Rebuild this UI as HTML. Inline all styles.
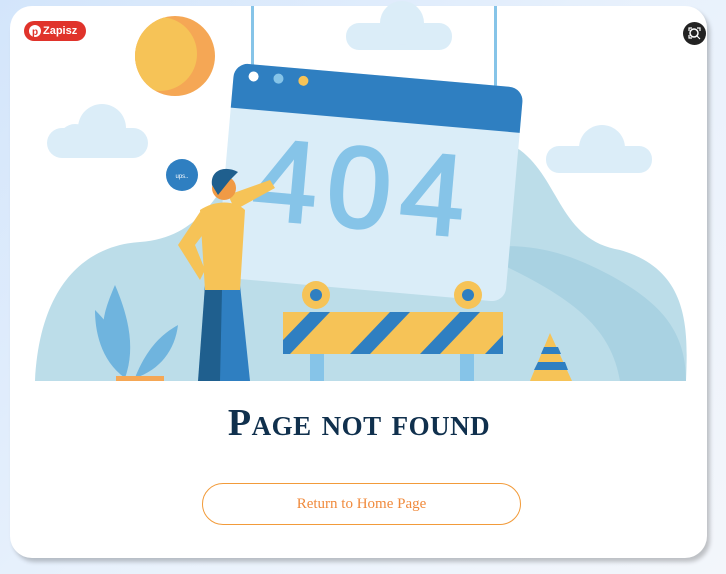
<!DOCTYPE html><html><head><style>
body{margin:0;width:726px;height:574px;overflow:hidden;background:linear-gradient(135deg,#d3e5fb 0%,#e8f1fc 50%,#f3f6fb 100%);font-family:"Liberation Serif",serif}
.card{position:absolute;left:10px;top:6px;width:697px;height:552px;background:#fff;border-radius:22px;box-shadow:3px 4px 4px rgba(0,0,0,.22);overflow:hidden}
.pin{position:absolute;left:24px;top:21px;width:62px;height:20px;background:#e0332b;border-radius:10px;color:#fff;font:bold 11px "Liberation Sans",sans-serif;line-height:20px}
.pin span{position:absolute;left:19px}
.h{position:absolute;left:0;width:718px;top:401px;text-align:center;color:#10304d;font-weight:bold;font-size:38px;font-variant:small-caps;letter-spacing:0.5px}
.btn{position:absolute;left:202px;top:483px;width:317px;height:40px;border:1px solid #f29b3a;border-radius:21px;color:#f08a3c;font-size:15px;text-align:center;line-height:40px}
</style></head><body>
<div class="card"></div>
<svg style="position:absolute;left:0;top:0" width="726" height="574">
<defs><clipPath id="s"><circle cx="175" cy="56" r="40"/></clipPath></defs>
<path d="M35 381 C40 280 90 245 140 242 C200 238 220 190 240 160 C300 120 460 110 520 150 C560 180 560 240 620 250 C690 270 688 330 686 381Z" fill="#bcdde9"/>
<path d="M470 250 C520 240 560 250 600 270 C660 300 686 330 686 381 L620 381 C610 320 560 290 470 250Z" fill="#a9d2e2"/>
<circle cx="175" cy="56" r="40" fill="#f5a755"/>
<circle cx="160" cy="54" r="37" fill="#f6c357" clip-path="url(#s)"/>
<g fill="#dbedf8"><rect x="47" y="128" width="101" height="30" rx="15"/><circle cx="102" cy="128" r="24"/><circle cx="75" cy="140" r="16"/>
<rect x="546" y="146" width="106" height="27" rx="13"/><circle cx="602" cy="148" r="23"/>
<rect x="346" y="23" width="106" height="27" rx="13"/><circle cx="402" cy="23" r="22"/></g>
<rect x="251" y="6" width="3" height="70" fill="#86c4e8"/><rect x="494" y="6" width="3" height="90" fill="#86c4e8"/>
<g transform="rotate(5 370 180)"><rect x="225" y="75" width="290" height="215" rx="14" fill="#daedf8"/>
<path d="M225 120 V89 a14 14 0 0 1 14 -14 h262 a14 14 0 0 1 14 14 V120Z" fill="#2f7fc1"/>
<circle cx="245" cy="87" r="5" fill="#fff"/><circle cx="270" cy="87" r="5" fill="#86c4e8"/><circle cx="295" cy="87" r="5" fill="#f6c357"/>
<text x="365" y="228" text-anchor="middle" font-family="Liberation Sans,sans-serif" font-size="115" fill="#86c4e8" stroke="#86c4e8" stroke-width="3" letter-spacing="10">404</text></g>
<rect x="283" y="312" width="220" height="42" fill="#f6c357"/>
<g fill="#2f7fc1"><path d="M283 340 L310 312 H330 L290 354 H283Z"/><path d="M350 354 L390 312 H410 L370 354Z"/><path d="M420 354 L460 312 H480 L440 354Z"/><path d="M485 354 L503 335 V354Z"/></g>
<rect x="310" y="354" width="14" height="27" fill="#86c4e8"/><rect x="460" y="354" width="14" height="27" fill="#86c4e8"/>
<circle cx="316" cy="295" r="14" fill="#f6c357"/><circle cx="316" cy="295" r="6" fill="#2f7fc1"/><circle cx="468" cy="295" r="14" fill="#f6c357"/><circle cx="468" cy="295" r="6" fill="#2f7fc1"/>
<path d="M530 381 L550 333 L572 381Z" fill="#f6c357"/><path d="M538 362 H565 L568 370 H534Z" fill="#2f7fc1"/><path d="M544 347 H558 L561 354 H541Z" fill="#2f7fc1"/>
<g fill="#6fb4de"><path d="M125 378 C95 340 100 320 115 285 C130 320 135 350 125 378Z"/><path d="M135 378 C150 340 170 330 178 325 C175 350 160 370 135 378Z"/><path d="M125 378 C100 360 95 330 95 310 C115 330 125 350 125 378Z"/></g>
<rect x="116" y="376" width="48" height="5" fill="#f5a755"/>
<circle cx="182" cy="175" r="16" fill="#2f7fc1"/><text x="182" y="178" text-anchor="middle" font-size="6" fill="#fff" font-family="Liberation Sans,sans-serif">ups..</text>
<path d="M205 285 L200 381 H250 L240 285Z" fill="#2f7fc1"/><path d="M205 285 L198 381 H220 L222 290Z" fill="#1f5f8e"/>
<path d="M200 210 C215 200 235 200 245 210 L240 290 H205 Z" fill="#f6c357"/>
<path d="M200 212 L178 245 L200 280 L205 270 L195 245 L210 225Z" fill="#f6c357"/>
<path d="M235 210 L275 188 L270 180 L228 195Z" fill="#f6c357"/>
<circle cx="224" cy="188" r="12" fill="#f09a45"/><path d="M212 185 C210 170 225 165 238 172 L230 180 L218 195Z" fill="#1f5f8e"/>
<rect x="10" y="381" width="697" height="140" fill="#fff"/>
</svg>
<div class="pin"><svg style="position:absolute;left:4px;top:3px" width="14" height="14"><circle cx="7" cy="7" r="6" fill="#fff"/><text x="7" y="11" text-anchor="middle" font-size="10" font-weight="bold" fill="#e0332b" font-family="Liberation Sans">p</text></svg><span>Zapisz</span></div>
<div style="position:absolute;left:683px;top:22px;width:23px;height:23px;border-radius:50%;background:#222"><svg width="23" height="23"><circle cx="11" cy="11" r="4" fill="none" stroke="#fff" stroke-width="1.5"/><path d="M14 14l3 3M6 9V6h3M17 9V6h-3M6 13v3h3" stroke="#fff" fill="none" stroke-width="1.2"/></svg></div>
<div class="h">Page not found</div>
<div class="btn">Return to Home Page</div>
</body></html>
